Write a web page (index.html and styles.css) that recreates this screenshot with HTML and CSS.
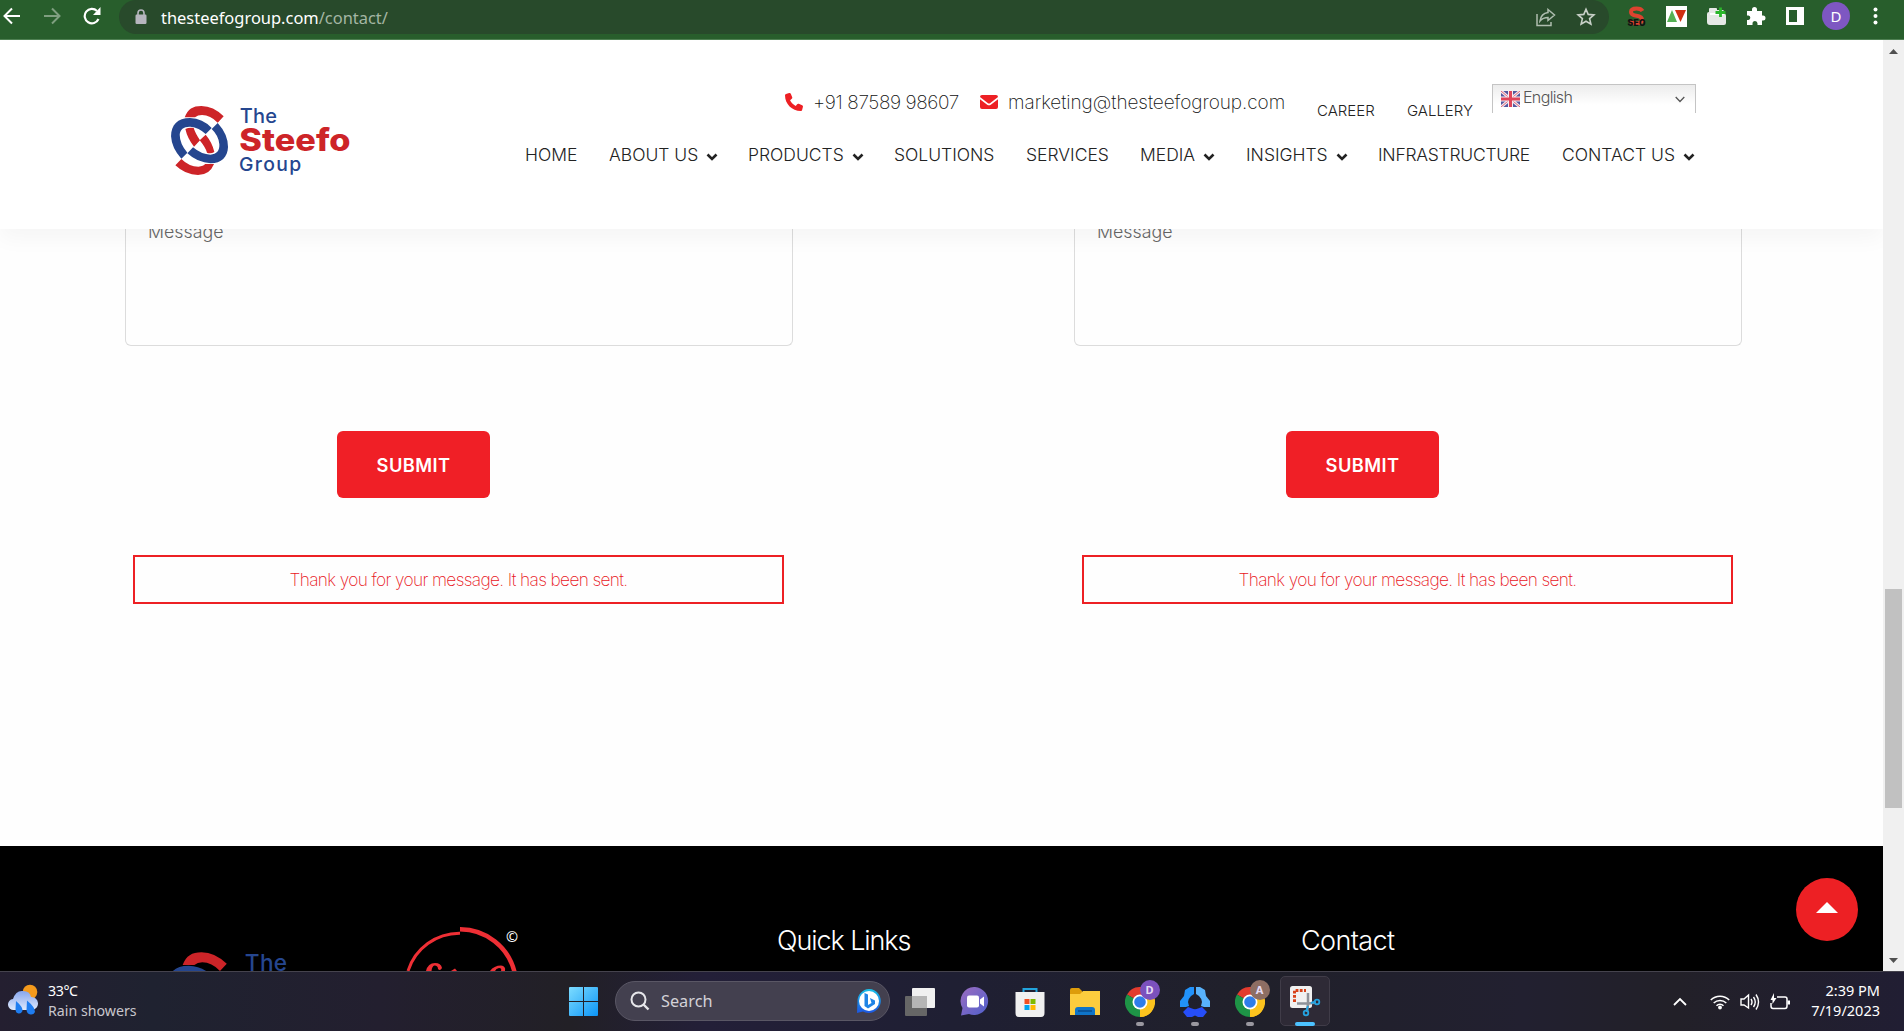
FILE: index.html
```html
<!DOCTYPE html>
<html lang="en">
<head>
<meta charset="utf-8">
<title>Contact - The Steefo Group</title>
<link rel="stylesheet" href="styles.css">
</head>
<body>
<svg class="defs" aria-hidden="true">
  <symbol id="steefo" viewBox="30 30 546 214">
    <g fill="#cd2428">
      <path d="M74 67C84 42 98 33 124 33Q160 33 191 64L173 83Q151 60 126 60Q113 60 105 67Z"/>
      <path d="M76 102Q87 97 101 99Q106 115 120 136L102 155Q82 130 76 102Z"/>
      <path d="M119 136L137 119Q157 143 163 171Q152 177 141 173Q136 157 119 136Z"/>
      <path d="M64 192Q87 215 115 215Q131 214 135 207L162 207Q149 240 114 240Q76 240 46 211Z"/>
    </g>
    <g fill="#25468f">
      <path d="M155 99Q128 70 90 69C52 69 33 90 33 124Q35 160 64 191L82 173Q59 146 59 119C60 103 72 94 91 95Q117 98 137 117Z"/>
      <path d="M173 84Q204 118 204 156C203 186 184 205 152 205Q112 203 82 175L99 157Q125 179 151 179C170 178 179 167 178 148Q176 122 155 102Z"/>
    </g>
    <g font-family="Inter, sans-serif">
      <text x="239" y="83" font-size="60" font-weight="500" fill="#25468f" textLength="112">The</text>
      <text x="238" y="168" font-size="93" font-weight="800" fill="#cd2428" textLength="334" lengthAdjust="spacingAndGlyphs">Steefo</text>
      <text x="237" y="227" font-size="58" font-weight="500" fill="#25468f" textLength="187">Group</text>
    </g>
  </symbol>
  <symbol id="chev" viewBox="0 0 12 8"><path d="M1.500 1.500L6 6L10.500 1.500" fill="none" stroke="#222" stroke-width="2.600"/></symbol>
  <symbol id="chrome" viewBox="0 0 30 30">
    <path d="M15 15L2 7.500A15 15 0 0 1 28 7.500Z" fill="#e33b2e"/>
    <path d="M15 15L28 7.500A15 15 0 0 1 15 30Z" fill="#fcc31e"/>
    <path d="M15 15L15 30A15 15 0 0 1 2 7.500Z" fill="#1e9446"/>
    <path d="M15 8H28Q31 15 27 24Q22 30 15 30L21.500 18Z" fill="#fcc31e"/>
    <circle cx="15" cy="15" r="7.500" fill="#fff"/><circle cx="15" cy="15" r="5.800" fill="#2f7de9"/>
  </symbol>
</svg>

<div class="toolbar">
  <svg class="t-back" width="18" height="18" viewBox="0 0 18 18"><path d="M17 9H2M9 1.500L1.500 9L9 16.500" fill="none" stroke="#fff" stroke-width="2"/></svg>
  <svg class="t-fwd" width="18" height="18" viewBox="0 0 18 18"><path d="M1 9H16M9 1.500L16.500 9L9 16.500" fill="none" stroke="#7f9f80" stroke-width="2"/></svg>
  <svg class="t-reload" width="18" height="18" viewBox="0 0 18 18"><path d="M15.500 12A7.200 7.200 0 1 1 14 4" fill="none" stroke="#fff" stroke-width="2.200"/><path d="M17.500 0V8H10Z" fill="#fff"/></svg>
  <div class="omnibox">
    <svg width="12" height="16" viewBox="0 0 12 16"><rect x="0.500" y="5.500" width="11" height="9.500" rx="1.200" fill="#b6b5be"/><path d="M3 6V4A3 3 0 0 1 9 4V6" fill="none" stroke="#b6b5be" stroke-width="1.600"/></svg>
    <span class="host">thesteefogroup.com<span class="path">/contact/</span></span>
    <svg class="share" width="20" height="19" viewBox="0 0 20 19"><path d="M1 6V17.500H15V14M12 1.500L18.500 7L12 12.500V9.500Q7 9.500 4 13Q5 5.500 12 4.500Z" fill="none" stroke="#aebdaf" stroke-width="1.500"/></svg>
    <svg class="star" width="20" height="20" viewBox="0 0 20 20"><path d="M10 2.200L12.200 7.400L17.900 7.900L13.600 11.600L14.900 17.100L10 14.200L5.100 17.100L6.400 11.600L2.100 7.900L7.800 7.400Z" fill="none" stroke="#c8d0c8" stroke-width="1.600"/></svg>
  </div>
  <svg class="ext seo" width="21" height="22" viewBox="0 0 21 22"><path d="M16.500 5Q15 2.500 10.500 2.500Q5 2.500 5 6Q5 9 10.500 9.700Q16 10.500 16 13.800Q16 17.500 10.500 17.500Q5.500 17.500 4 14.500" fill="none" stroke="#dd432f" stroke-width="4"/><text x="1.500" y="19.500" font-family="Inter" font-size="8.500" font-weight="900" fill="#111" textLength="18">SEO</text></svg>
  <svg class="ext" width="21" height="21" viewBox="0 0 21 21"><path d="M0 0H21V21H0Z" fill="#fff"/><path d="M1 16L6 4L11 16Z" fill="#55b054"/><path d="M9 4H20L14.500 16Z" fill="#cf2f12"/></svg>
  <svg class="ext" width="21" height="21" viewBox="0 0 21 21"><path d="M1 8Q1 6 3 6V3Q3 2 4 2H10Q11 2 11 3V4H17Q18 4 18 6V8H19Q20 8 20 10V17Q20 19 18 19H4Q1 19 1 16Z" fill="#e6e8e6"/><path d="M4 8H18" stroke="#fff" stroke-width="2"/><path d="M14.500 1.500V11M9.500 6.500H19.500" stroke="#2bb62b" stroke-width="2.800"/></svg>
  <svg class="ext" width="20" height="20" viewBox="0 0 20 20"><path d="M1 5H6V3.500A2.500 2.500 0 0 1 11 3.500V5H16V9.500H17A2.500 2.500 0 0 1 17 14.500H16V19H11.500V17.500A2.200 2.200 0 0 0 6.500 17.500V19H1V14H2.500A2.300 2.300 0 0 0 2.500 9.500H1Z" fill="#fff"/></svg>
  <svg class="ext" width="20" height="20" viewBox="0 0 20 20"><path d="M1 1H19V19H1ZM4 4V16H12V4Z" fill="#fff" fill-rule="evenodd"/></svg>
  <span class="avatar">D</span>
  <svg class="dots" width="5" height="18" viewBox="0 0 5 18"><g fill="#fff"><circle cx="2.500" cy="2.500" r="2"/><circle cx="2.500" cy="9" r="2"/><circle cx="2.500" cy="15.500" r="2"/></g></svg>
</div>

<div class="viewport">
  <div class="page">
    <header class="site-header">
      <svg class="logo"><use href="#steefo"/></svg>
      <div class="head-right">
        <div class="topline">
          <div class="contact phone"><svg width="18" height="18" viewBox="0 0 512 512"><path fill="#ed2024" d="M164.900 24.600c-7.700-18.600-28-28.500-47.400-23.200l-88 24C12.100 30.200 0 46 0 64c0 247.400 200.600 448 448 448 18 0 33.800-12.100 38.600-29.500l24-88c5.300-19.400-4.600-39.700-23.200-47.400l-96-40c-16.300-6.800-35.200-2.100-46.300 11.600L304.700 368c-70.400-33.300-127.400-90.300-160.700-160.700l49.300-40.300c13.700-11.200 18.400-30 11.600-46.300l-40-96z"/></svg><span>+91 87589 98607</span></div>
          <div class="contact mail"><svg width="18" height="14" viewBox="0 0 18 14"><path fill="#ed2024" d="M2 0H16Q18 0 18 2L10 8.200Q9 8.800 8 8.200L0 2Q0 0 2 0ZM0 4.200L7.200 9.700Q9 10.800 10.800 9.700L18 4.200V12Q18 14 16 14H2Q0 14 0 12Z"/></svg><span>marketing@thesteefogroup.com</span></div>
          <a class="small">CAREER</a>
          <a class="small">GALLERY</a>
          <div class="lang">
            <svg width="19" height="16" viewBox="0 0 19 16"><rect width="19" height="16" rx="1.500" fill="#54589f"/><path d="M0 0L19 16M19 0L0 16" stroke="#f3e8ee" stroke-width="3"/><path d="M0 0L19 16M19 0L0 16" stroke="#e0697c" stroke-width="1"/><path d="M9.500 0V16M0 8H19" stroke="#f6eef2" stroke-width="5"/><path d="M9.500 0V16M0 8H19" stroke="#e0455a" stroke-width="3"/></svg>
            <span>English</span>
            <svg class="lang-chev" width="10" height="7" viewBox="0 0 10 7"><path d="M0.700 1L5 5.500L9.300 1" fill="none" stroke="#555" stroke-width="1.300"/></svg>
          </div>
        </div>
        <nav class="nav">
          <a>HOME</a>
          <a>ABOUT US<svg><use href="#chev"/></svg></a>
          <a>PRODUCTS<svg><use href="#chev"/></svg></a>
          <a>SOLUTIONS</a>
          <a>SERVICES</a>
          <a>MEDIA<svg><use href="#chev"/></svg></a>
          <a>INSIGHTS<svg><use href="#chev"/></svg></a>
          <a class="infra">INFRASTRUCTURE</a>
          <a>CONTACT US<svg><use href="#chev"/></svg></a>
        </nav>
      </div>
    </header>

    <main class="forms">
      <section class="form">
        <div class="field"><span>Message</span></div>
        <button class="submit">SUBMIT</button>
        <p class="sent">Thank you for your message. It has been sent.</p>
      </section>
      <section class="form">
        <div class="field"><span>Message</span></div>
        <button class="submit">SUBMIT</button>
        <p class="sent">Thank you for your message. It has been sent.</p>
      </section>
    </main>

    <footer class="footer">
      <svg class="foot-logo"><use href="#steefo"/></svg>
      <svg class="foot-seal" width="130" height="46" viewBox="400 925 130 46">
        <path d="M460 933.200A54 54 0 0 0 408 971" fill="none" stroke="#ee2f35" stroke-width="3"/>
        <path d="M460 929.200A56 56 0 0 1 514.500 972" fill="none" stroke="#ee2f35" stroke-width="4.500"/>
        <path d="M426 971Q428 963 435 963Q441 963 442 968Q440 971.500 438 969Q438 965.500 434.500 965.500Q432 966 431.500 971Z" fill="#ee2f35"/>
        <path d="M451 971L455 968.500L457 971Z" fill="#ee2f35"/>
        <path d="M490 971Q494 965.500 501 965.500Q506 966 505 971H501Q502 968 499 968Q496 968.500 495 971Z" fill="#ee2f35"/>
        <text x="506" y="941.500" font-family="Noto Sans" font-size="14.500" fill="#fff">©</text>
      </svg>
      <h3 class="links">Quick Links</h3>
      <h3>Contact</h3>
    </footer>
    <a class="to-top"><svg width="22" height="11" viewBox="0 0 22 11"><path d="M0 11L11 0L22 11Z" fill="#fff"/></svg></a>
  </div>
  <div class="scrollbar">
    <svg width="9" height="5" viewBox="0 0 9 5"><path d="M0 5L4.500 0L9 5Z" fill="#505050"/></svg>
    <div class="thumb"></div>
    <svg class="down" width="9" height="5" viewBox="0 0 9 5"><path d="M0 0L4.500 5L9 0Z" fill="#505050"/></svg>
  </div>
</div>

<div class="taskbar">
  <div class="weather">
    <svg width="30" height="32" viewBox="0 0 30 32"><defs><linearGradient id="cl" x2="0" y2="1"><stop offset="0" stop-color="#86a6ee"/><stop offset="1" stop-color="#dfe9fb"/></linearGradient></defs><circle cx="22" cy="8" r="7.300" fill="#f49a1c"/><path d="M6 26A5.500 5.500 0 0 1 5 15Q8 6 15 7Q22 7 23 13A6.500 6.500 0 0 1 24 26Z" fill="url(#cl)"/><path d="M8 17Q15 23 14.500 27Q13 30 10.500 29.500Q7.500 29 7.500 25ZM19 16.500Q27 23 27 28Q25.500 31 22.500 30.500Q19 30 18.500 26Z" fill="#1f7df0"/></svg>
    <div class="w-text"><span>33°C</span><span class="dim">Rain showers</span></div>
  </div>
  <div class="cell"><svg width="29" height="29" viewBox="0 0 29 29"><defs><linearGradient id="wn" gradientUnits="userSpaceOnUse" x1="0" y1="0" x2="29" y2="29"><stop offset="0" stop-color="#7ddcff"/><stop offset="1" stop-color="#0c95f7"/></linearGradient></defs><path d="M0 1Q0 0 1 0H14V14H0ZM15 0H28Q29 0 29 1V14H15ZM0 15H14V29H1Q0 29 0 28ZM15 15H29V28Q29 29 28 29H15Z" fill="url(#wn)"/></svg></div>
  <div class="search">
    <svg width="20" height="20" viewBox="0 0 20 20"><circle cx="8.500" cy="8.500" r="7" fill="none" stroke="#e6e6ea" stroke-width="2"/><path d="M13.500 13.500L18.500 18.500" stroke="#e6e6ea" stroke-width="2.400"/></svg>
    <span>Search</span>
    <svg class="bing" width="26" height="26" viewBox="0 0 26 26"><defs><linearGradient id="bg" x2="0" y2="1"><stop offset="0" stop-color="#19c1e8"/><stop offset="1" stop-color="#1d55e0"/></linearGradient></defs><path d="M13 1A12 12 0 1 1 7 23.500L1 25L1.500 13A12 12 0 0 1 13 1Z" fill="url(#bg)"/><circle cx="13" cy="13" r="10" fill="#fff"/><path d="M8.500 5L12 6.500V17L15.500 15L14 10L19 12.500V16L12 20.500L8.500 18Z" fill="#2084e6"/></svg>
  </div>
  <div class="cells">
    <div class="cell"><svg width="30" height="28" viewBox="0 0 30 28"><rect y="8" width="22" height="20" rx="1" fill="#666"/><rect x="7" width="23" height="20" rx="1" fill="#f0f0f0"/><path d="M7 8H22V20H7Z" fill="#b5b5b5"/></svg></div>
    <div class="cell"><svg width="30" height="29" viewBox="0 0 30 29"><defs><linearGradient id="ch" x2="1" y2="1"><stop offset="0" stop-color="#9c6cc0"/><stop offset="1" stop-color="#4f60cc"/></linearGradient></defs><path d="M15 0A14 14 0 1 1 9 27L1 28.500L2.500 21A14 14 0 0 1 15 0Z" fill="url(#ch)"/><rect x="7" y="8.500" width="12" height="12" rx="2" fill="#fff"/><path d="M20 12.500L24 9.500V19.500L20 16.500Z" fill="#fff"/></svg></div>
    <div class="cell"><svg width="30" height="30" viewBox="0 0 30 30"><path d="M8.500 7V2H21.500V7" fill="none" stroke="#22a4dd" stroke-width="2"/><path d="M0.500 5H29.500V26Q29.500 30 26 30H4Q0.500 30 0.500 26Z" fill="#f0f0f0"/><path d="M9.500 12H14.500V17H9.500Z" fill="#f25022"/><path d="M15.500 12H20.500V17H15.500Z" fill="#7fba00"/><path d="M9.500 18H14.500V23H9.500Z" fill="#00a4ef"/><path d="M15.500 18H20.500V23H15.500Z" fill="#ffb900"/></svg></div>
    <div class="cell"><svg width="30" height="27" viewBox="0 0 30 27"><path d="M0 2Q0 0 2 0H9L12 3V9H0Z" fill="#dd9c0b"/><path d="M0 6H10L13 3H30V27H0Z" fill="#fccc3e"/><path d="M5 27V22Q5 19 8 19H22Q25 19 25 22V27Z" fill="#0f74c8"/><path d="M8 23H22" stroke="#0a4b8c" stroke-width="1.500"/></svg></div>
    <div class="cell run"><svg width="30" height="30"><use href="#chrome"/></svg><b class="badge">D</b></div>
    <div class="cell run"><svg width="30" height="30" viewBox="0 0 30 30"><path d="M5 3L10 0H14V7L11 9Q8 12 8 15L9 19L6 20H0V14L4 9Z" fill="#2192fb"/><path d="M25 3L20 0H16V7L19 9Q22 12 22 15L21 19L24 20H30V14L26 9Z" fill="#58b2fb"/><path d="M3 25L8 20L12 21.500Q15 23 18 21.500L22 20L27 25L23 30H18L15 28.500L12 30H7Z" fill="#264ef8"/></svg></div>
    <div class="cell run"><svg width="30" height="30"><use href="#chrome"/></svg><b class="badge brown">A</b></div>
    <div class="cell run active"><svg width="32" height="32" viewBox="0 0 32 32"><rect x="1" y="1" width="22" height="22" rx="2.500" fill="#f1f1f1"/><path d="M5.500 17V5.500H17" fill="none" stroke="#d8431b" stroke-width="3" stroke-dasharray="2.800 1.400"/><path d="M19 8V19L18 27M8 18.500H20L27 17.500" fill="none" stroke="#8f9299" stroke-width="2.500"/><circle cx="28" cy="17" r="2.300" fill="none" stroke="#24a3e0" stroke-width="1.800"/><circle cx="17" cy="28" r="2.300" fill="none" stroke="#24a3e0" stroke-width="1.800"/><path d="M17.500 25.500L19 21M25.500 17L22 18" stroke="#24a3e0" stroke-width="2"/></svg></div>
  </div>
  <div class="tray">
    <svg width="14" height="9" viewBox="0 0 14 9"><path d="M1 8L7 2L13 8" fill="none" stroke="#fff" stroke-width="1.800"/></svg>
    <svg class="wifi" width="20" height="16" viewBox="0 0 20 16"><g fill="none" stroke="#fff" stroke-width="1.500"><path d="M0.800 6A13 13 0 0 1 19.200 6M3.700 9A9 9 0 0 1 16.300 9M6.500 11.800A5 5 0 0 1 13.500 11.800"/></g><circle cx="10" cy="13.500" r="1.900" fill="#fff"/></svg>
    <svg width="20" height="18" viewBox="0 0 20 18"><g fill="none" stroke="#fff" stroke-width="1.400"><path d="M1 6H4L8.500 2V15L4 12H1Z"/><path d="M11 6Q13 9 11 12M13.500 4Q17 9 13.500 14M16 1.500Q21 9 16 16.500"/></g></svg>
    <svg width="20" height="18" viewBox="0 0 20 18"><path d="M7 4H15Q17 4 17 6V13Q17 15.500 15 15.500H3Q1 15.500 1 13V10" fill="none" stroke="#fff" stroke-width="1.500"/><path d="M17.500 7.500H20V11.500H17.500Z" fill="#fff"/><path d="M4 0V5H6.500L2.500 11V7H0.500Z" fill="#fff"/></svg>
    <div class="clock"><span class="time">2:39 PM</span><span>7/19/2023</span></div>
  </div>
</div>
</body>
</html>
```
FILE: styles.css
```css
* { box-sizing: border-box; }
body { margin: 0; width: 1904px; height: 1031px; overflow: hidden; display: flex; flex-direction: column; background: #fefefe; font-family: Inter, "Liberation Sans", sans-serif; }
.defs { display: none; }
svg { flex: none; }
span, a, h3 { white-space: nowrap; }

/* Browser toolbar */
.toolbar { height: 40px; flex: none; background: #285e2c; border-bottom: 1px solid #4e8052; display: flex; align-items: flex-start; padding-left: 3px; }
.t-back { margin-top: 7px; }
.t-fwd { margin: 7px 0 0 22px; }
.t-reload { margin: 7px 0 0 22px; }
.omnibox { width: 1490px; height: 34px; margin-left: 18px; margin-right: 17px; background: #284a2b; border-radius: 17px; display: flex; align-items: center; padding: 0 13px 0 16px; font-family: "Noto Sans", "Open Sans", sans-serif; font-size: 16.450px; color: #fff; }
.host { margin-left: 14px; }
.path { color: #a3b6a3; }
.share { margin-left: auto; }
.star { margin-left: 20px; }
.ext { margin-top: 6px; margin-right: 19px; }
.avatar { width: 28px; height: 28px; margin: 2px 23px 0 -2px; border-radius: 50%; background: #7e57c2; color: #fff; font: 15px/28px "Noto Sans", sans-serif; text-align: center; }
.dots { margin-top: 7px; }

/* Page */
.viewport { height: 931px; flex: none; display: grid; grid-template-columns: 1883px 21px; }
.page { position: relative; display: flex; flex-direction: column; height: 931px; overflow: hidden; }
.site-header { height: 189px; flex: none; display: flex; background: #fff; padding: 44px 0 0 170px; position: relative; z-index: 2; box-shadow: 0 10px 20px rgba(0,0,0,.035); }
.logo { width: 182px; height: 71.300px; margin-top: 21px; }
.head-right { margin-left: 173px; width: 1172px; }
.topline { display: grid; grid-template-columns: 195px 337px 90px 85px 204px; padding-left: 260px; height: 29px; }
.contact { display: flex; align-items: center; height: 20px; margin-top: 8px; font-size: 19px; font-weight: 200; line-height: 20px; color: #111; }
.contact span { margin: 2px 0 0 10px; }
.phone { letter-spacing: -.4px; }
.mail { letter-spacing: -.05px; }
.small { font-size: 15px; line-height: 20px; margin-top: 16.500px; font-weight: 300; color: #222; }
.lang { height: 29px; border: 1px solid #c4c4c4; border-bottom: 0; background: linear-gradient(#ececec, #fff 70%); display: flex; align-items: flex-start; padding: 6px 10px 0 8px; font-size: 16px; font-weight: 300; line-height: 20px; letter-spacing: -.65px; color: #555; }
.lang span { margin: -4px 0 0 3px; }
.lang-chev { margin: 5px 0 0 auto; }
.nav { margin-top: 31.500px; display: grid; grid-template-columns: 84px 139px 146px 132px 114px 106px 132px 184px 136px; font-size: 17.500px; line-height: 20px; color: #222; font-weight: 350; }
.nav a { display: flex; }
.nav svg { width: 12px; height: 8px; margin: 8px 0 0 8px; }
.nav .infra { letter-spacing: -.25px; }

.forms { height: 617px; flex: none; display: grid; grid-template-columns: 668px 668px; column-gap: 281px; padding-left: 125px; align-content: start; }
.field { display: flow-root; height: 117px; border: 1px solid #dcdcdc; border-top: 0; border-radius: 0 0 6px 6px; padding-left: 22px; }
.field span { display: block; margin-top: -7px; font-size: 17.800px; line-height: 20px; font-weight: 300; color: #666; }
.submit { display: block; width: 153px; height: 67px; margin: 85px 0 0 212px; padding: 0; border: 0; border-radius: 6px; background: #f01f26; color: #fff; font: 600 18.300px Inter, sans-serif; letter-spacing: .4px; }
.sent { width: 651px; height: 49px; margin: 57px 0 0 8px; border: 2px solid #ed2024; color: #e8151c; font-size: 17.300px; font-weight: 200; line-height: 46px; letter-spacing: -.64px; text-align: center; }

.footer { height: 125px; flex: none; background: #000; color: #fff; display: flex; align-items: flex-start; padding-left: 166px; }
.foot-logo { width: 206px; height: 80.700px; margin-top: 104.500px; }
.foot-seal { margin: 79px 0 0 28px; }
.footer h3 { margin: 80px 0 0; font-size: 27px; line-height: 30px; font-weight: 300; letter-spacing: -.6px; width: 300px; }
.footer h3.links { margin-left: 247px; width: 524px; letter-spacing: -1.080px; }
.to-top { position: absolute; left: 1796px; top: 838px; width: 62px; height: 63px; border-radius: 50%; background: #ed2024; display: flex; justify-content: center; padding-top: 24px; }

.scrollbar { background: #f0f0f0; display: flex; flex-direction: column; align-items: center; padding: 9px 0 8px; }
.thumb { width: 17px; height: 219px; margin-top: 535px; background: #c1c1c1; }
.down { margin-top: auto; }

/* Windows taskbar */
.taskbar { height: 60px; flex: none; border-top: 1px solid #45434d; background: linear-gradient(90deg, #241f30, #1f2230 8%, #231f2f 20%, #222026 30%, #231f38 37%, #1f1f33 50%, #20202a 66%, #222030 80%, #222028 88%, #211e33); display: flex; font-family: "Noto Sans", "Open Sans", sans-serif; color: #fff; }
.weather { width: 556px; display: flex; padding: 12px 0 0 8px; }
.w-text { display: flex; flex-direction: column; margin: -3px 0 0 10px; font-size: 14.200px; line-height: 20px; }
.w-text span:first-child { font-size: 14.200px; letter-spacing: -.4px; }
.dim { color: #c8c6cc; }
.cell { position: relative; width: 55px; height: 59px; display: flex; align-items: center; justify-content: center; }
.search { width: 275px; height: 40px; margin: 9px 2.500px 0 4px; border-radius: 20px; background: #43404f; border: 1px solid #5a5765; display: flex; align-items: center; padding: 0 7px 0 14px; font-size: 16.300px; color: #d4d2d8; }
.search span { margin-left: 11px; }
.bing { margin-left: auto; }
.cells { display: flex; }
.run::after { content: ""; position: absolute; left: 23.500px; top: 50px; width: 8px; height: 4px; border-radius: 2px; background: #9a98a0; }
.badge { position: absolute; left: 27px; top: 8px; width: 20px; height: 20px; border-radius: 50%; background: #7b51bd; color: #e6dcf5; font-size: 11px; line-height: 20px; text-align: center; }
.brown { background: #8d6e63; }
.active { width: 50px; height: 50px; margin: 4px 0 0 2.500px; border: 1px solid #403c48; border-radius: 5px; background: #2e2a36; }
.active::after { left: 14px; top: 45px; width: 20px; background: #4cc2ff; }
.tray { margin-left: auto; display: flex; align-items: center; gap: 10px; padding-right: 24px; }
.wifi { margin-left: 13px; }
.clock { width: 80px; display: flex; flex-direction: column; text-align: right; font-size: 14.500px; line-height: 20px; margin-top: -3px; }
```
